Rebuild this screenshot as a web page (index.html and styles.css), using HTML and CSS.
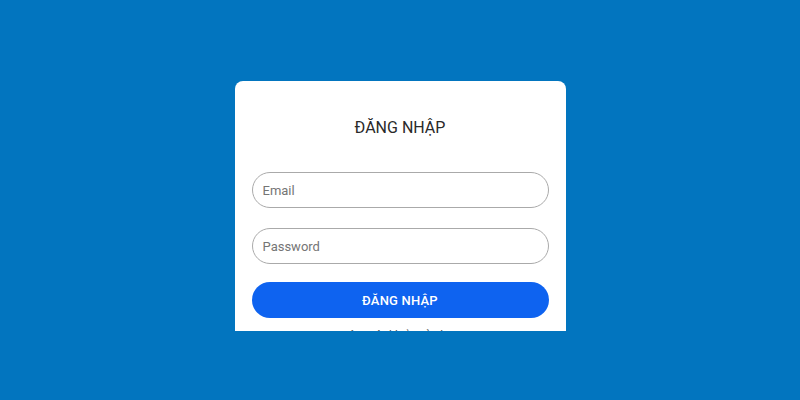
FILE: index.html
```html
<!DOCTYPE html>
<html lang="vi">
<head>
<meta charset="utf-8">
<link rel="stylesheet" href="styles.css">
</head>
<body>
<div class="page">
  <div class="card">
    <h2 class="title">ĐĂNG NHẬP</h2>
    <form class="form">
      <input class="field" type="text" placeholder="Email">
      <input class="field" type="password" placeholder="Password">
      <button class="btn" type="button">ĐĂNG NHẬP</button>
      <p class="link">Quên mật khẩu của bạn?</p>
    </form>
  </div>
</div>
</body>
</html>
```
FILE: styles.css
```css
html, body {
  margin: 0;
  padding: 0;
  height: 100%;
  background: #0275bf;
  font-family: Roboto, "Noto Sans", sans-serif;
}
.page {
  display: flex;
  justify-content: center;
  padding-top: 81px;
}
.card {
  width: 331px;
  height: 250px;
  box-sizing: border-box;
  background: #fff;
  border-radius: 8px 8px 0 0;
  padding: 37px 17px 0;
  overflow: hidden;
}
.title {
  margin: 0;
  font-size: 16px;
  line-height: 20px;
  font-weight: 400;
  color: #2a2a2a;
  text-align: center;
}
.form {
  display: flex;
  flex-direction: column;
  margin-top: 34px;
}
.field {
  height: 36px;
  box-sizing: border-box;
  border: 1px solid #aaa;
  border-radius: 18px;
  padding: 0 10px;
  font-family: Roboto, sans-serif;
  font-size: 13px;
  color: #333;
  outline: none;
  margin-bottom: 20px;
}
.field::placeholder { color: #757575; }
.field + .btn { margin-top: -2px; }
.btn {
  height: 36px;
  border: none;
  border-radius: 18px;
  background: #0e63f0;
  color: #fff;
  font-family: Roboto, sans-serif;
  font-size: 13px;
  font-weight: 500;
  letter-spacing: 0.2px;
}
.link {
  margin: 11px 0 0;
  text-align: center;
  font-size: 12px;
  color: #555;
}
```
